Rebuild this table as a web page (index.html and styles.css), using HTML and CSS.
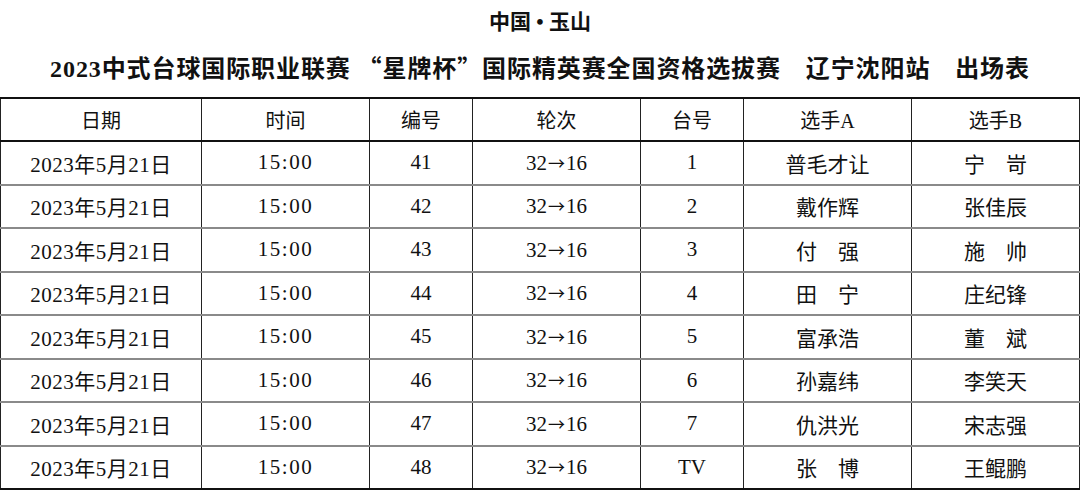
FILE: index.html
```html
<!DOCTYPE html>
<html lang="zh-CN">
<head>
<meta charset="utf-8">
<link rel="stylesheet" href="styles.css">
</head>
<body>
<div class="page">
  <div class="title1">中国 • 玉山</div>
  <div class="title2">2023中式台球国际职业联赛 <span class="cjk">“</span>星牌杯<span class="cjk">”</span>国际精英赛全国资格选拔赛　辽宁沈阳站　出场表</div>
  <table class="grid">
    <colgroup>
      <col class="c1"><col class="c2"><col class="c3"><col class="c4"><col class="c5"><col class="c6"><col class="c7">
    </colgroup>
    <thead>
      <tr><th>日期</th><th>时间</th><th>编号</th><th>轮次</th><th>台号</th><th>选手A</th><th>选手B</th></tr>
    </thead>
    <tbody>
      <tr><td class="date">2023年5月21日</td><td class="time">15:00</td><td>41</td><td>32<span class="arrow">→</span>16</td><td>1</td><td>普毛才让</td><td>宁　岢</td></tr>
      <tr><td class="date">2023年5月21日</td><td class="time">15:00</td><td>42</td><td>32<span class="arrow">→</span>16</td><td>2</td><td>戴作辉</td><td>张佳辰</td></tr>
      <tr><td class="date">2023年5月21日</td><td class="time">15:00</td><td>43</td><td>32<span class="arrow">→</span>16</td><td>3</td><td>付　强</td><td>施　帅</td></tr>
      <tr><td class="date">2023年5月21日</td><td class="time">15:00</td><td>44</td><td>32<span class="arrow">→</span>16</td><td>4</td><td>田　宁</td><td>庄纪锋</td></tr>
      <tr><td class="date">2023年5月21日</td><td class="time">15:00</td><td>45</td><td>32<span class="arrow">→</span>16</td><td>5</td><td>富承浩</td><td>董　斌</td></tr>
      <tr><td class="date">2023年5月21日</td><td class="time">15:00</td><td>46</td><td>32<span class="arrow">→</span>16</td><td>6</td><td>孙嘉纬</td><td>李笑天</td></tr>
      <tr><td class="date">2023年5月21日</td><td class="time">15:00</td><td>47</td><td>32<span class="arrow">→</span>16</td><td>7</td><td>仇洪光</td><td>宋志强</td></tr>
      <tr><td class="date">2023年5月21日</td><td class="time">15:00</td><td>48</td><td>32<span class="arrow">→</span>16</td><td>TV</td><td>张　博</td><td>王鲲鹏</td></tr>
    </tbody>
  </table>
</div>
</body>
</html>
```
FILE: styles.css
```css
html, body {
  margin: 0;
  padding: 0;
  background: #fff;
}
.page {
  width: 1080px;
  height: 490px;
  overflow: hidden;
  font-family: "Liberation Serif", "Noto Sans CJK SC", serif;
  color: #111;
}
.cjk {
  font-family: "Noto Sans CJK SC", sans-serif;
}
.title1 {
  height: 44px;
  line-height: 44px;
  text-align: center;
  font-size: 21px;
  font-weight: 600;
}
.title2 {
  height: 53px;
  line-height: 46px;
  text-align: center;
  font-size: 24px;
  font-weight: 600;
  letter-spacing: 0.9px;
  white-space: nowrap;
}
.grid {
  width: 1079px;
  border-collapse: collapse;
  table-layout: fixed;
  border-top: 2px solid #111;
  border-bottom: 2px solid #111;
  font-size: 21px;
}
.c1 { width: 201px; }
.c2 { width: 168px; }
.c3 { width: 103px; }
.c4 { width: 168px; }
.c5 { width: 103px; }
.c6 { width: 168px; }
.c7 { width: 168px; }
.grid th, .grid td {
  border-left: 1px solid #222;
  border-right: 1px solid #222;
  text-align: center;
  font-weight: 400;
  padding: 0;
  white-space: nowrap;
}
.grid th {
  height: 41px;
  font-size: 20px;
  border-bottom: 2px solid #111;
}
.grid td {
  height: 41.5px;
  border-bottom: 2px solid #8a8a8a;
}
.grid tr:last-child td {
  border-bottom: 2px solid #111;
}
.date {
  letter-spacing: 0.5px;
}
.time {
  letter-spacing: 1.5px;
}
.arrow {
  font-family: "Noto Sans CJK SC", sans-serif;
  font-size: 17px;
  margin: 0 1px;
}
```
